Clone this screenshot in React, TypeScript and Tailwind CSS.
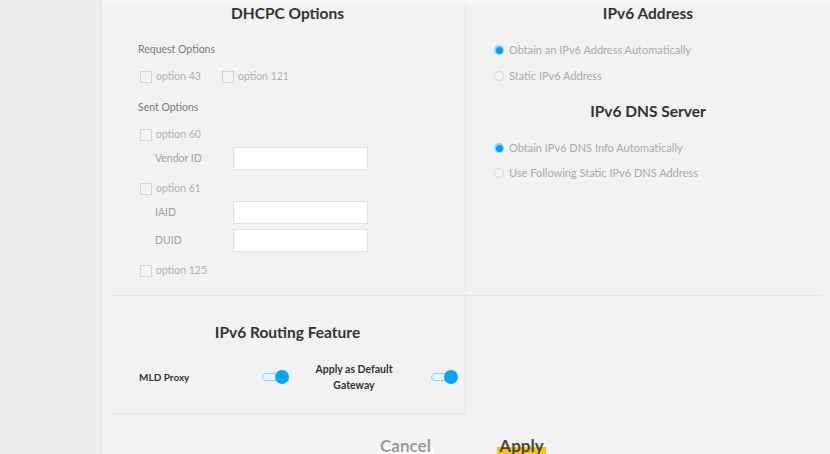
import React from 'react';

const font = { fontFamily: 'Lato, "Open Sans", sans-serif' };

function Check({ label }: { label: string }) {
  return (
    <div className="flex items-center h-[14px]">
      <span className="w-[12px] h-[12px] border border-[#d4d4d4] bg-[#f4f4f4] mr-[4px]" />
      <span className="text-[10.5px] text-[#b0b0b0]">{label}</span>
    </div>
  );
}

function Field({ label }: { label: string }) {
  return (
    <div className="flex items-center h-[23px] pl-[17px]">
      <span className="w-[78px] text-[10.5px] text-[#a0a0a0]">{label}</span>
      <div className="w-[135px] h-[23px] bg-white border border-[#e2e2e2]" />
    </div>
  );
}

function Radio({ label, on }: { label: string; on?: boolean }) {
  return (
    <div className="flex items-center h-[14px]">
      {on ? (
        <span className="w-[10px] h-[10px] rounded-full bg-[#8fd3ff] flex items-center justify-center mr-[5px]">
          <span className="w-[7px] h-[7px] rounded-full bg-[#0a9cf5]" />
        </span>
      ) : (
        <span className="w-[10px] h-[10px] rounded-full border border-[#d6d6d6] bg-[#f7f7f7] mr-[5px]" />
      )}
      <span className="text-[11px] text-[#aaaaaa]">{label}</span>
    </div>
  );
}

function Toggle() {
  return (
    <div className="relative w-[27px] h-[14px]">
      <div className="absolute left-0 top-[3px] w-[20px] h-[8px] rounded-full border border-[#8dd0ff] bg-[#eaf6ff]" />
      <div className="absolute right-0 top-0 w-[14px] h-[14px] rounded-full bg-[#05a6ff]" />
    </div>
  );
}

export default function App() {
  return (
    <div className="w-[830px] h-[454px] overflow-hidden flex bg-[#ececec]" style={font}>
      {/* gutter */}
      <div className="w-[100px] shrink-0 bg-[#ededed]" />
      <div className="w-[2px] shrink-0 bg-[#e4e4e4]" />

      {/* panel */}
      <div className="flex-1 flex flex-col bg-[#f2f2f2]">
        <div className="h-[4px] bg-[#f7f7f7]" />
        <div className="pl-[8px] flex flex-col">
          {/* top row */}
          <div className="flex h-[292px] border-b border-[#e6e6e6] mr-[8px]">
            <div className="w-[356px] border-r border-[#e6e6e6] flex flex-col pl-[28px]">
              <div className="h-[18px] leading-[18px] text-center pr-[28px] text-[15.5px] font-bold text-[#333]">DHCPC Options</div>
              <div className="mt-[20px] h-[14px] leading-[14px] text-[10.5px] text-[#7a7a7a]">Request Options</div>
              <div className="mt-[14px] flex gap-[21px] pl-[2px]">
                <Check label="option 43" />
                <Check label="option 121" />
              </div>
              <div className="mt-[16px] h-[14px] leading-[14px] text-[10.5px] text-[#7a7a7a]">Sent Options</div>
              <div className="mt-[14px] pl-[2px]"><Check label="option 60" /></div>
              <div className="mt-[5px]"><Field label="Vendor ID" /></div>
              <div className="mt-[12px] pl-[2px]"><Check label="option 61" /></div>
              <div className="mt-[5px]"><Field label="IAID" /></div>
              <div className="mt-[5px]"><Field label="DUID" /></div>
              <div className="mt-[12px] pl-[2px]"><Check label="option 125" /></div>
            </div>
            <div className="flex-1 flex flex-col pl-[28px]">
              <div className="h-[18px] leading-[18px] text-center pr-[20px] text-[15.5px] font-bold text-[#333]">IPv6 Address</div>
              <div className="mt-[21px]"><Radio label="Obtain an IPv6 Address Automatically" on /></div>
              <div className="mt-[12px]"><Radio label="Static IPv6 Address" /></div>
              <div className="mt-[19px] h-[18px] leading-[18px] text-center pr-[20px] text-[15.5px] font-bold text-[#333]">IPv6 DNS Server</div>
              <div className="mt-[21px]"><Radio label="Obtain IPv6 DNS Info Automatically" on /></div>
              <div className="mt-[11px]"><Radio label="Use Following Static IPv6 DNS Address" /></div>
            </div>
          </div>

          {/* bottom row */}
          <div className="flex h-[118px]">
            <div className="w-[356px] border-r border-b border-[#e6e6e6] flex flex-col">
              <div className="mt-[27px] h-[18px] leading-[18px] text-center text-[15.5px] font-bold text-[#333]">IPv6 Routing Feature</div>
              <div className="mt-[20px] flex items-center h-[32px]">
                <span className="ml-[29px] w-[123px] text-[10px] font-bold text-[#333]">MLD Proxy</span>
                <Toggle />
                <span className="ml-[14px] w-[102px] text-center text-[10.5px] font-bold leading-[16px] text-[#333]">
                  Apply as Default Gateway
                </span>
                <span className="ml-[26px]"><Toggle /></span>
              </div>
            </div>
          </div>
        </div>

        {/* buttons */}
        <div className="flex mt-auto h-[40px] items-end">
          <div className="ml-[275px] relative w-[57px] h-[16px]">
            <div className="absolute left-[1px] right-0 bottom-0 h-[7px] bg-white" />
            <span className="absolute inset-0 text-center text-[17px] leading-[16px] font-bold text-[#9a9a9a]">Cancel</span>
          </div>
          <div className="ml-[63px] relative w-[49px] h-[16px]">
            <div className="absolute left-0 right-0 bottom-0 h-[7px] bg-[#ffc400]" />
            <span className="absolute inset-0 text-center text-[17px] leading-[16px] font-bold text-[#444]">Apply</span>
          </div>
        </div>
      </div>
    </div>
  );
}
